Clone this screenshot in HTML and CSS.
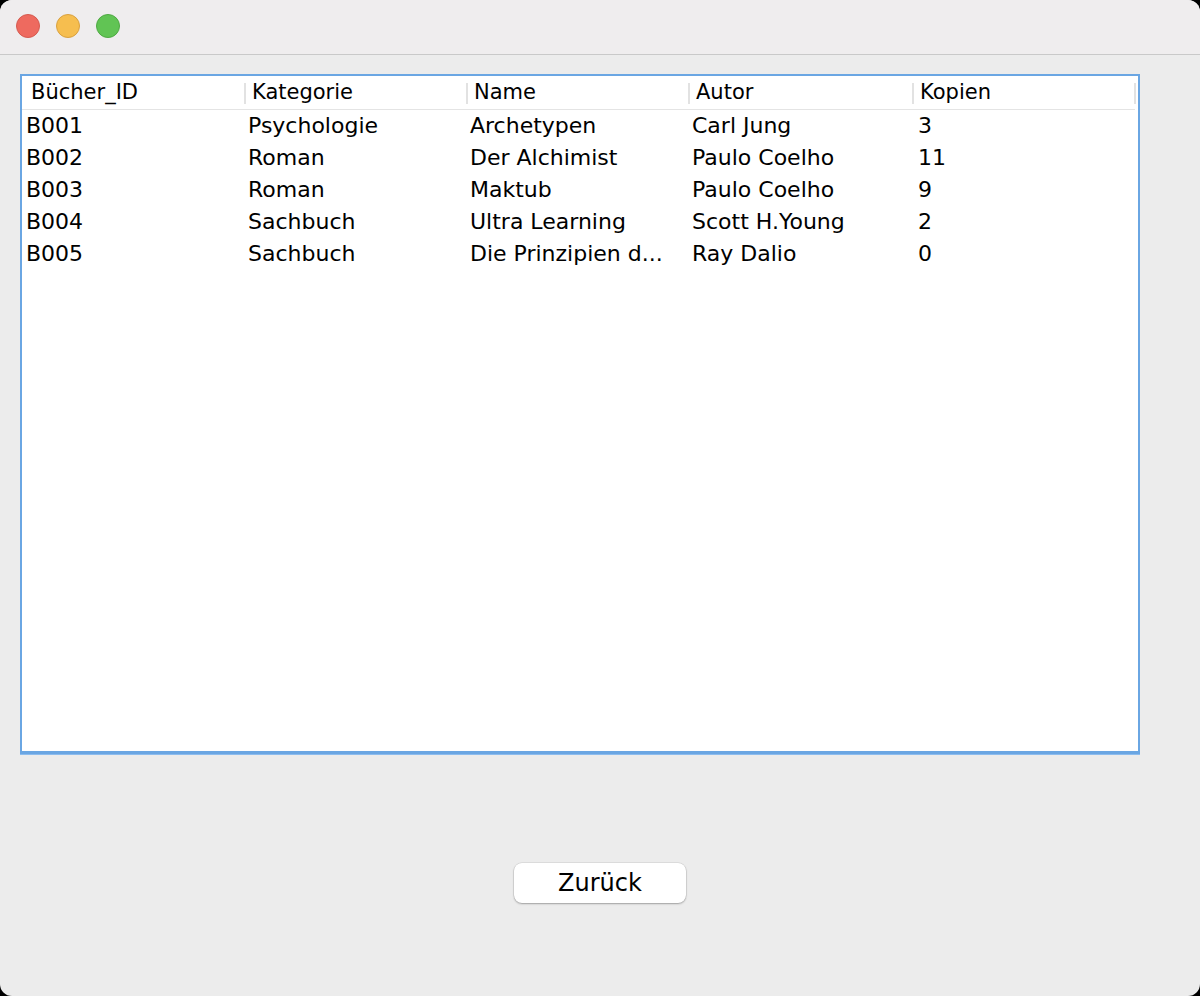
FILE: index.html
```html
<!DOCTYPE html>
<html lang="de">
<head>
<meta charset="utf-8">
<title>Bücher</title>
<link rel="stylesheet" href="styles.css">
</head>
<body>
<div class="window">
  <div class="titlebar">
    <span class="light red"></span>
    <span class="light yellow"></span>
    <span class="light green"></span>
  </div>
  <div class="content">
    <div class="scrollpane">
      <div class="table">
        <div class="head first">Bücher_ID</div>
        <div class="head">Kategorie</div>
        <div class="head">Name</div>
        <div class="head">Autor</div>
        <div class="head">Kopien</div>

        <div class="cell first">B001</div>
        <div class="cell">Psychologie</div>
        <div class="cell">Archetypen</div>
        <div class="cell">Carl Jung</div>
        <div class="cell num">3</div>

        <div class="cell first">B002</div>
        <div class="cell">Roman</div>
        <div class="cell">Der Alchimist</div>
        <div class="cell">Paulo Coelho</div>
        <div class="cell num">11</div>

        <div class="cell first">B003</div>
        <div class="cell">Roman</div>
        <div class="cell">Maktub</div>
        <div class="cell">Paulo Coelho</div>
        <div class="cell num">9</div>

        <div class="cell first">B004</div>
        <div class="cell">Sachbuch</div>
        <div class="cell">Ultra Learning</div>
        <div class="cell">Scott H.Young</div>
        <div class="cell num">2</div>

        <div class="cell first">B005</div>
        <div class="cell">Sachbuch</div>
        <div class="cell">Die Prinzipien d...</div>
        <div class="cell">Ray Dalio</div>
        <div class="cell num">0</div>
      </div>
    </div>
    <div class="actions">
      <button class="btn" type="button">Zurück</button>
    </div>
  </div>
</div>
</body>
</html>
```

FILE: styles.css
```css
html, body {
  margin: 0;
  padding: 0;
  background: #000;
}

body {
  font-family: "DejaVu Sans", "Liberation Sans", sans-serif;
  color: #000;
}

.window {
  width: 1200px;
  height: 996px;
  border-radius: 12px;
  overflow: hidden;
  background: #ececec;
  display: flex;
  flex-direction: column;
}

.titlebar {
  flex: none;
  background: #efedee;
  border-bottom: 1px solid #c9c9c9;
  display: flex;
  align-items: flex-start;
  gap: 16px;
  padding: 14px 0 0 16px;
  box-sizing: border-box;
  height: 55px;
}

.light {
  width: 24px;
  height: 24px;
  border-radius: 50%;
  box-sizing: border-box;
}

.red { background: #ee6a5f; border: 1px solid #d55b50; }
.yellow { background: #f6be4f; border: 1px solid #d9a140; }
.green { background: #61c454; border: 1px solid #4fa943; }

.content {
  flex: 1;
  display: flex;
  flex-direction: column;
  padding: 19px 0 0 20px;
}

.scrollpane {
  width: 1120px;
  height: 680px;
  box-sizing: border-box;
  background: #fff;
  border: 2px solid #6aa6e3;
  border-bottom: 3px solid #6aa6e3;
  box-shadow: 0 1px 0 #8cbcee;
  overflow: hidden;
}

.table {
  display: grid;
  grid-template-columns: 223px 222px 222px 224px 222px;
  grid-auto-rows: 32px;
  grid-template-rows: 34px;
}

.head {
  position: relative;
  font-size: 21px;
  line-height: 33px;
  padding-left: 7px;
  border-bottom: 1px solid #e4e4e4;
  white-space: nowrap;
}

.head.first {
  padding-left: 9px;
}

.head::after {
  content: "";
  position: absolute;
  right: -1px;
  top: 7px;
  width: 2px;
  height: 21px;
  background: #e2e2e2;
}

.cell {
  font-size: 22px;
  line-height: 32px;
  padding-left: 3px;
  white-space: nowrap;
  overflow: hidden;
}

.cell.first {
  padding-left: 4px;
}

.cell.num {
  padding-left: 5px;
}

.actions {
  display: flex;
  justify-content: center;
  padding-top: 109px;
  padding-right: 20px;
}

.btn {
  width: 172px;
  height: 40px;
  background: #fff;
  border: none;
  border-radius: 8px;
  box-shadow: 0 0 0 0.5px rgba(0, 0, 0, 0.12), 0 1px 2px rgba(0, 0, 0, 0.28);
  font-family: "DejaVu Sans", "Liberation Sans", sans-serif;
  font-size: 24px;
  color: #000;
  padding: 0;
  line-height: 40px;
}
```
